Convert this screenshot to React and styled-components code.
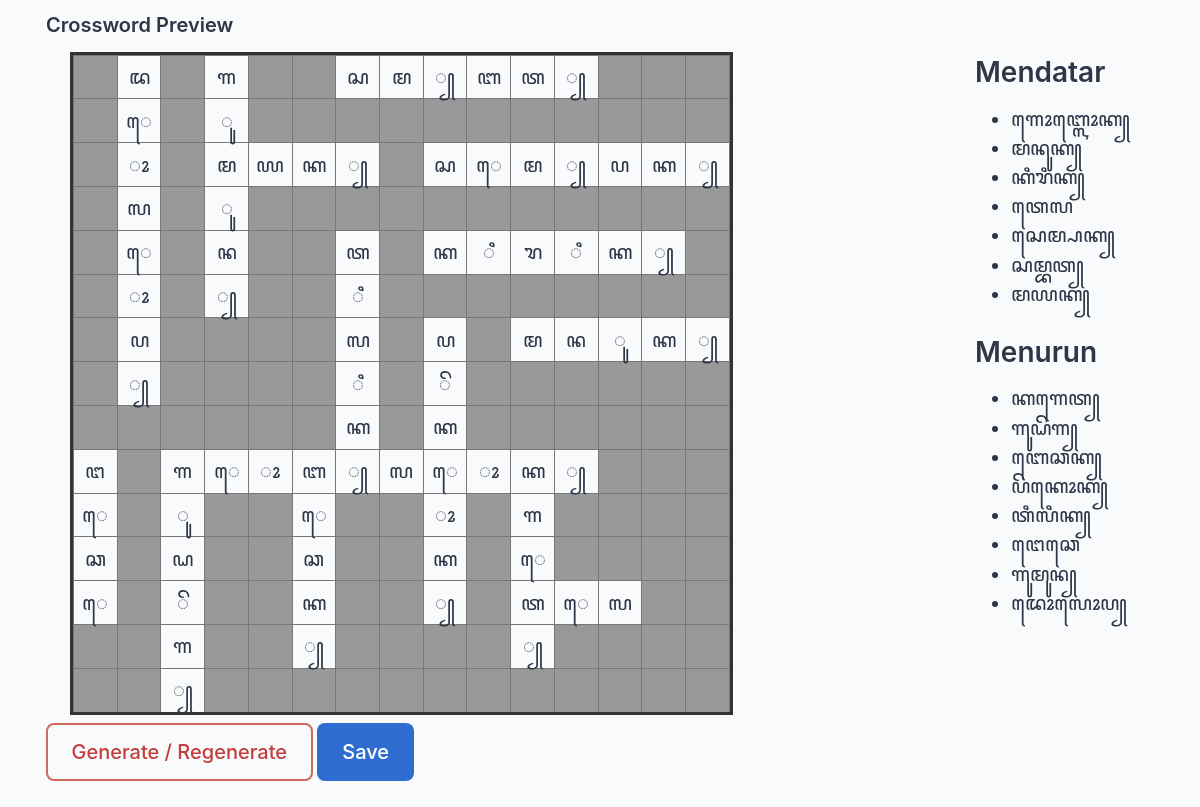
import styled, { createGlobalStyle } from 'styled-components';

const GlobalStyle = createGlobalStyle`
    html, body {
        margin: 0;
        background-color: #f9fafc;
        color: #2d3748;
        font-family: Inter, "Noto Sans", sans-serif;
    }
`;

const Page = styled.div`
    width: 1200px;
    height: 807px;
    box-sizing: border-box;
    padding: 14px 0 0 46px;
    display: flex;
    overflow: hidden;
    will-change: transform;
`;

const Preview = styled.section`
    width: 711px;
    flex-shrink: 0;
`;

const Title = styled.h3`
    margin: 0 0 14.7px;
    font-size: 20px;
    line-height: 23px;
    font-weight: 600;
`;

const Board = styled.div`
    width: 657px;
    height: 657px;
    margin: 0 auto;
    border: 3px solid #333;
    overflow: hidden;
`;

const Table = styled.table`
    width: 657px;
    table-layout: fixed;
    border-collapse: collapse;
`;

const Cell = styled.td`
    box-sizing: border-box;
    height: 43.8px;
    padding: 0;
    border: 1px solid #777;
    font-size: 20px;
    line-height: 20px;
    text-align: center;
    vertical-align: middle;
    background-color: ${(props) => (props.$filled ? '#f9fafc' : '#999')};
`;

const Actions = styled.div`
    margin-top: 8px;
    display: flex;
    gap: 4.8px;
`;

const Button = styled.button`
    height: 58px;
    box-sizing: border-box;
    border-radius: 8px;
    font-family: inherit;
    font-size: 20px;
    font-weight: 500;
    cursor: pointer;

    &.outline {
        width: 266.5px;
        background-color: transparent;
        border: 2px solid #d2695f;
        color: #c53e3e;
    }

    &.solid {
        width: 96.7px;
        background-color: #2f6ccf;
        border: 0;
        color: white;
    }
`;

const Clues = styled.aside`
    margin-left: 218px;
    padding-top: 41px;
`;

const ClueHeading = styled.h2`
    margin: 0 0 15.5px;
    font-size: 28px;
    line-height: 34px;
    font-weight: 600;
`;

const ClueList = styled.ul`
    margin: 0 0 26px;
    padding-left: 36px;

    li {
        font-size: 20px;
        line-height: 29.2px;
    }
`;

const rows = [
    '. ꦢ . ꦒ . . ꦱ ꦩ ꧀ ꦧ ꦠ ꧀ . . .',
    '. ꦺ . ꦸ . . . . . . . . . . .',
    '. ꦴ . ꦩ ꦪ ꦏ ꧀ . ꦱ ꦺ ꦩ ꧀ ꦥ ꦏ ꧀',
    '. ꦭ . ꦸ . . . . . . . . . . .',
    '. ꦺ . ꦤ . . ꦠ . ꦏ ꦶ ꦫ ꦶ ꦏ ꧀ .',
    '. ꦴ . ꧀ . . ꦶ . . . . . . . .',
    '. ꦥ . . . . ꦭ . ꦥ . ꦩ ꦤ ꦸ ꦏ ꧀',
    '. ꧀ . . . . ꦶ . ꦼ . . . . . .',
    '. . . . . . ꦏ . ꦏ . . . . . .',
    'ꦔ . ꦒ ꦺ ꦴ ꦧ ꧀ ꦭ ꦺ ꦴ ꦏ ꧀ . . .',
    'ꦺ . ꦸ . . ꦺ . . ꦴ . ꦒ . . . .',
    'ꦕ . ꦝ . . ꦕ . . ꦏ . ꦺ . . . .',
    'ꦺ . ꦼ . . ꦏ . . ꧀ . ꦠ ꦺ ꦭ . .',
    '. . ꦒ . . ꧀ . . . . ꧀ . . . .',
    '. . ꧀ . . . . . . . . . . . .',
];

const across = ['ꦒꦺꦴꦧ꧀ꦭꦺꦴꦏ꧀', 'ꦩꦤꦸꦏ꧀', 'ꦏꦶꦫꦶꦏ꧀', 'ꦠꦺꦭ', 'ꦱꦺꦩ꧀ꦥꦏ꧀', 'ꦱꦩ꧀ꦧꦠ꧀', 'ꦩꦪꦏ꧀'];
const down = ['ꦏꦒꦺꦠ꧀', 'ꦒꦸꦝꦼꦒ꧀', 'ꦧꦺꦕꦏ꧀', 'ꦥꦼꦏꦺꦴꦏ꧀', 'ꦠꦶꦭꦶꦏ꧀', 'ꦔꦺꦕꦺ', 'ꦒꦸꦩꦸꦤ꧀', 'ꦢꦺꦴꦭꦺꦴꦥ꧀'];

const App = () => (
    <Page>
        <GlobalStyle />
        <Preview>
            <Title>Crossword Preview</Title>
            <Board>
                <Table>
                    <tbody>
                        {rows.map((row, r) => (
                            <tr key={r}>
                                {row.split(' ').map((letter, c) => (
                                    <Cell key={c} $filled={letter !== '.'}>
                                        {letter !== '.' && letter}
                                    </Cell>
                                ))}
                            </tr>
                        ))}
                    </tbody>
                </Table>
            </Board>
            <Actions>
                <Button className='outline'>Generate / Regenerate</Button>
                <Button className='solid'>Save</Button>
            </Actions>
        </Preview>
        <Clues>
            <ClueHeading>Mendatar</ClueHeading>
            <ClueList>
                {across.map((word) => <li key={word}>{word}</li>)}
            </ClueList>
            <ClueHeading>Menurun</ClueHeading>
            <ClueList>
                {down.map((word) => <li key={word}>{word}</li>)}
            </ClueList>
        </Clues>
    </Page>
);

export default App;
